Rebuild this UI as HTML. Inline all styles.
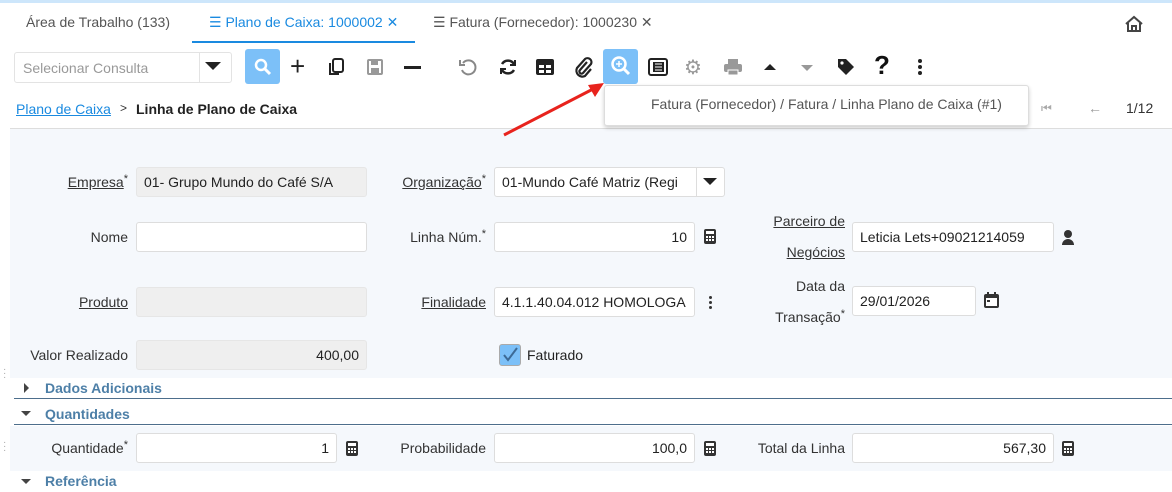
<!DOCTYPE html>
<html><head><meta charset="utf-8"><style>
*{box-sizing:border-box;margin:0;padding:0}
body{width:1172px;height:491px;overflow:hidden;background:#fff;font-family:"Liberation Sans",sans-serif;font-size:14px;color:#333;position:relative}
.a{position:absolute}
.lbl{position:absolute;font-size:14px;color:#333;text-align:right;white-space:nowrap;line-height:16px}
.u{text-decoration:underline}
s{text-decoration:none;font-size:11px;position:relative;top:-5px;line-height:0}
.in{position:absolute;height:30px;border:1px solid #ddd;border-radius:3px;background:#fff;font-size:14px;padding:6px 7px;white-space:nowrap;overflow:hidden;color:#222}
.ro{background:#efefef;border-color:#e6e6e6}
.r{text-align:right}
.sec{position:absolute;left:14px;width:1158px;height:22px;font-weight:bold;color:#4d7fa7;font-size:14px;padding-left:31px;padding-top:3px}
.ic{position:absolute;color:#333}
</style></head><body>
<div class="a" style="left:0;top:0;width:1172px;height:3px;background:#cde6fb"></div>
<div class="a" style="left:26px;top:14px;color:#555">Área de Trabalho (133)</div>
<div class="a" style="left:209px;top:14px;color:#1a8ae0">☰ Plano de Caixa: 1000002 ✕</div>
<div class="a" style="left:192px;top:41px;width:223px;height:2px;background:#1a8ae0"></div>
<div class="a" style="left:433px;top:14px;color:#555">☰ Fatura (Fornecedor): 1000230 ✕</div>
<svg class="a" style="left:1124px;top:14px" width="20" height="20" viewBox="0 0 20 20"><path d="M2 10L10 3l8 7M4 9v8h12V9M8 17v-5h4v5" fill="none" stroke="#444" stroke-width="2"/></svg>
<div class="a" style="left:14px;top:52px;width:218px;height:31px;border:1px solid #e3e3e3;border-radius:3px;color:#999;padding:7px 8px">Selecionar Consulta</div>
<div class="a" style="left:199px;top:52px;width:1px;height:31px;background:#e3e3e3"></div>
<div class="a" style="left:205px;top:62px;border-left:8px solid transparent;border-right:8px solid transparent;border-top:8px solid #222"></div>
<div class="a" style="left:245px;top:49px;width:35px;height:35px;background:#7cc0f8;border-radius:3px"></div>
<svg class="a" style="left:253px;top:57px" width="20" height="20"><circle cx="8" cy="8" r="5" fill="none" stroke="#fff" stroke-width="2.5"/><path d="M12 12l5 5" stroke="#fff" stroke-width="3"/></svg>
<div class="a" style="left:290px;top:52px;font-size:26px;line-height:28px;color:#222">+</div>
<svg class="a" style="left:327px;top:57px" width="20" height="20"><rect x="6" y="2" width="10" height="13" rx="2" fill="none" stroke="#222" stroke-width="2"/><path d="M3 6v11h9" fill="none" stroke="#222" stroke-width="2"/></svg>
<svg class="a" style="left:366px;top:58px" width="18" height="18"><rect x="2" y="2" width="14" height="14" rx="1" fill="none" stroke="#999" stroke-width="2"/><rect x="5" y="3" width="7" height="4" fill="#999"/><rect x="5" y="10" width="8" height="5" fill="#999"/></svg>
<div class="a" style="left:404px;top:66px;width:17px;height:3px;background:#222"></div>
<svg class="a" style="left:458px;top:57px" width="20" height="20"><path d="M5 6a7 7 0 1 1 -1 7" fill="none" stroke="#888" stroke-width="2"/><path d="M2 3v5h5" fill="none" stroke="#888" stroke-width="2"/></svg>
<svg class="a" style="left:498px;top:57px" width="20" height="20"><path d="M16 7a7 7 0 0 0 -12 0M4 13a7 7 0 0 0 12 0" fill="none" stroke="#222" stroke-width="2.5"/><path d="M17 3v5h-5M3 17v-5h5" fill="none" stroke="#222" stroke-width="2"/></svg>
<svg class="a" style="left:535px;top:58px" width="20" height="18"><rect x="1" y="1" width="18" height="16" rx="2" fill="#222"/><rect x="4" y="7" width="5" height="3" fill="#fff"/><rect x="11" y="7" width="5" height="3" fill="#fff"/><rect x="4" y="12" width="5" height="3" fill="#fff"/><rect x="11" y="12" width="5" height="3" fill="#fff"/></svg>
<svg class="a" style="left:573px;top:56px" width="20" height="22"><path d="M14 6l-7 8a2 2 0 0 0 3 3l8-9a4 4 0 0 0-6-5l-8 9a6 6 0 0 0 8 8l6-7" fill="none" stroke="#222" stroke-width="2.2"/></svg>
<div class="a" style="left:603px;top:49px;width:35px;height:35px;background:#7cc0f8;border-radius:3px"></div>
<svg class="a" style="left:610px;top:55px" width="22" height="22"><circle cx="9" cy="9" r="6.5" fill="none" stroke="#fff" stroke-width="2.5"/><path d="M9 6v6M6 9h6" stroke="#fff" stroke-width="1.5"/><path d="M14 14l5 5" stroke="#fff" stroke-width="3"/></svg>
<svg class="a" style="left:648px;top:58px" width="20" height="18"><rect x="1" y="1" width="18" height="16" rx="2" fill="none" stroke="#222" stroke-width="2"/><rect x="5" y="4" width="11" height="10" fill="#222"/><path d="M7 6h7M7 9h7M7 12h7" stroke="#fff"/></svg>
<div class="a" style="left:684px;top:55px;font-size:20px;color:#999">⚙</div>
<svg class="a" style="left:723px;top:57px" width="20" height="20"><rect x="5" y="2" width="10" height="5" fill="#999"/><rect x="1" y="7" width="18" height="8" rx="2" fill="#999"/><rect x="5" y="13" width="10" height="5" fill="#999" stroke="#fff"/></svg>
<div class="a" style="left:764px;top:64px;border-left:6px solid transparent;border-right:6px solid transparent;border-bottom:6px solid #222"></div>
<div class="a" style="left:801px;top:65px;border-left:6px solid transparent;border-right:6px solid transparent;border-top:6px solid #999"></div>
<svg class="a" style="left:836px;top:57px" width="20" height="20"><path d="M2 2h8l8 8-8 8-8-8z" fill="#222"/><circle cx="6" cy="6" r="1.6" fill="#fff"/></svg>
<div class="a" style="left:874px;top:50px;font-size:26px;font-weight:bold;color:#111">?</div>
<div class="a" style="left:918px;top:59px;width:4px;height:4px;border-radius:2px;background:#222;box-shadow:0 6px 0 #222,0 12px 0 #222"></div>
<div class="a" style="left:16px;top:101px;color:#1a8ae0;text-decoration:underline">Plano de Caixa</div>
<div class="a" style="left:120px;top:101px;font-size:12px">&gt;</div>
<div class="a" style="left:136px;top:101px;font-weight:bold;color:#222">Linha de Plano de Caixa</div>
<div class="a" style="left:1041px;top:101px;color:#aaa;font-size:12px">⏮</div>
<div class="a" style="left:1088px;top:100px;color:#999">←</div>
<div class="a" style="left:1126px;top:100px;color:#333">1/12</div>
<div class="a" style="left:10px;top:128px;width:1162px;height:250px;background:#f5f8fc;border-top:1px solid #ddd"></div>
<div class="a" style="left:604px;top:85px;width:425px;height:41px;background:#fff;border:1px solid #ddd;border-radius:3px;box-shadow:0 2px 4px rgba(0,0,0,.2)"></div>
<div class="a" style="left:651px;top:96px;color:#555">Fatura (Fornecedor) / Fatura / Linha Plano de Caixa (#1)</div>
<svg class="a" style="left:500px;top:80px" width="110" height="60"><path d="M4 55L95 8" stroke="#e8231d" stroke-width="3"/><path d="M104 3L88 5l7 12z" fill="#e8231d"/></svg>
<div class="lbl" style="right:1044px;top:174px"><span class="u">Empresa</span><s>*</s></div>
<div class="in ro" style="left:136px;top:167px;width:231px">01- Grupo Mundo do Café S/A</div>
<div class="lbl" style="right:686px;top:174px"><span class="u">Organização</span><s>*</s></div>
<div class="in" style="left:494px;top:167px;width:231px">01-Mundo Café Matriz (Regi</div>
<div class="a" style="left:696px;top:168px;width:1px;height:28px;background:#ddd"></div>
<div class="a" style="left:703px;top:178px;border-left:7px solid transparent;border-right:7px solid transparent;border-top:7px solid #222"></div>
<div class="lbl" style="right:1044px;top:229px">Nome</div>
<div class="in" style="left:136px;top:222px;width:231px"></div>
<div class="lbl" style="right:686px;top:229px">Linha Núm.<s>*</s></div>
<div class="in r" style="left:494px;top:222px;width:201px">10</div>
<svg class="ic" style="left:704px;top:229px" width="12" height="15"><rect x="0" y="0" width="12" height="15" rx="2" fill="#333"/><rect x="2" y="2" width="8" height="3" fill="#fff"/><path d="M2 7h2v2H2zM5 7h2v2H5zM8 7h2v2H8zM2 10h2v2H2zM5 10h2v2H5zM8 10h2v2H8z" fill="#fff"/></svg>
<div class="lbl u" style="right:327px;top:213px;line-height:16px">Parceiro de</div>
<div class="lbl u" style="right:327px;top:244px;line-height:16px">Negócios</div>
<div class="in" style="left:852px;top:222px;width:202px">Leticia Lets+09021214059</div>
<div class="a" style="left:1064px;top:230px;width:8px;height:8px;border-radius:50%;background:#333"></div>
<div class="a" style="left:1062px;top:239px;width:12px;height:6px;border-radius:6px 6px 0 0;background:#333"></div>
<div class="lbl" style="right:1044px;top:294px"><span class="u">Produto</span></div>
<div class="in ro" style="left:136px;top:287px;width:231px"></div>
<div class="lbl" style="right:686px;top:294px"><span class="u">Finalidade</span></div>
<div class="in" style="left:494px;top:287px;width:201px">4.1.1.40.04.012 HOMOLOGA</div>
<div class="a" style="left:709px;top:296px;width:3px;height:3px;background:#333;border-radius:2px;box-shadow:0 5px 0 #333,0 10px 0 #333"></div>
<div class="lbl" style="right:327px;top:278px">Data da</div>
<div class="lbl" style="right:327px;top:309px">Transação<s>*</s></div>
<div class="in" style="left:852px;top:286px;width:124px">29/01/2026</div>
<svg class="ic" style="left:984px;top:292px" width="15" height="16"><rect x="0" y="2" width="15" height="14" rx="2" fill="#333"/><rect x="2" y="6" width="11" height="8" fill="#fff"/><rect x="3" y="0" width="2" height="4" fill="#333"/><rect x="10" y="0" width="2" height="4" fill="#333"/><rect x="3" y="8" width="3" height="2" fill="#333"/></svg>
<div class="lbl" style="right:1044px;top:347px">Valor Realizado</div>
<div class="in ro r" style="left:136px;top:340px;width:231px">400,00</div>
<div class="a" style="left:499px;top:344px;width:22px;height:22px;background:#7cc0f8;border:1px solid #aaa;border-radius:3px"></div>
<svg class="a" style="left:501px;top:346px" width="18" height="18"><path d="M3 9l4 5 9-12" fill="none" stroke="#3d6a96" stroke-width="2"/></svg>
<div class="a" style="left:527px;top:347px;color:#222">Faturado</div>
<div class="sec" style="top:377px;border-bottom:1px solid #4d6e8c">Dados Adicionais</div>
<div class="a" style="left:24px;top:383px;border-top:5px solid transparent;border-bottom:5px solid transparent;border-left:5px solid #444"></div>
<div class="sec" style="top:403px;border-bottom:1px solid #4d6e8c">Quantidades</div>
<div class="a" style="left:21px;top:411px;border-left:5px solid transparent;border-right:5px solid transparent;border-top:5px solid #444"></div>
<div class="a" style="left:10px;top:426px;width:1162px;height:45px;background:#f5f8fc"></div>
<div class="lbl" style="right:1044px;top:440px">Quantidade<s>*</s></div>
<div class="in r" style="left:136px;top:433px;width:201px">1</div>
<svg class="ic" style="left:346px;top:441px" width="12" height="15"><rect width="12" height="15" rx="2" fill="#333"/><rect x="2" y="2" width="8" height="3" fill="#fff"/><path d="M2 7h2v2H2zM5 7h2v2H5zM8 7h2v2H8zM2 10h2v2H2zM5 10h2v2H5zM8 10h2v2H8z" fill="#fff"/></svg>
<div class="lbl" style="right:686px;top:440px">Probabilidade</div>
<div class="in r" style="left:494px;top:433px;width:201px">100,0</div>
<svg class="ic" style="left:704px;top:441px" width="12" height="15"><rect width="12" height="15" rx="2" fill="#333"/><rect x="2" y="2" width="8" height="3" fill="#fff"/><path d="M2 7h2v2H2zM5 7h2v2H5zM8 7h2v2H8zM2 10h2v2H2zM5 10h2v2H5zM8 10h2v2H8z" fill="#fff"/></svg>
<div class="lbl" style="right:327px;top:440px">Total da Linha</div>
<div class="in r" style="left:852px;top:433px;width:202px">567,30</div>
<svg class="ic" style="left:1062px;top:441px" width="12" height="15"><rect width="12" height="15" rx="2" fill="#333"/><rect x="2" y="2" width="8" height="3" fill="#fff"/><path d="M2 7h2v2H2zM5 7h2v2H5zM8 7h2v2H8zM2 10h2v2H2zM5 10h2v2H5zM8 10h2v2H8z" fill="#fff"/></svg>
<div class="sec" style="top:470px">Referência</div>
<div class="a" style="left:21px;top:479px;border-left:5px solid transparent;border-right:5px solid transparent;border-top:5px solid #444"></div>
<div class="a" style="left:3px;top:368px;color:#aaa;font-size:10px;line-height:4px">·<br>·<br>·</div>
<div class="a" style="left:3px;top:441px;color:#aaa;font-size:10px;line-height:4px">·<br>·<br>·</div>
</body></html>
